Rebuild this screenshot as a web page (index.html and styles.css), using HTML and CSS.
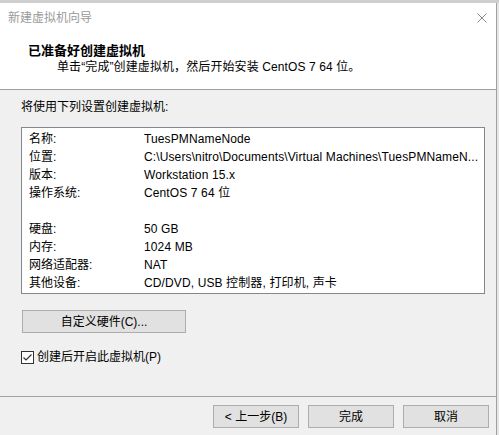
FILE: index.html
```html
<!DOCTYPE html>
<html lang="zh-CN">
<head>
  <meta charset="UTF-8" />
  <meta name="viewport" content="width=device-width, initial-scale=1.0"/>
  <title>新建虚拟机向导</title>
  <link rel="stylesheet" href="styles.css">
</head>
<body>
  <div class="top-strip"></div>
  <div class="window">
    <div class="titlebar">
      <span class="title">新建虚拟机向导</span>
      <svg class="close" width="10" height="10" viewBox="0 0 10 10">
        <path d="M0.5 0.5 L9.5 9.5 M9.5 0.5 L0.5 9.5" stroke="#8a8a8a" stroke-width="1" fill="none"/>
      </svg>
    </div>
    <div class="header">
      <h1>已准备好创建虚拟机</h1>
      <p>单击“完成”创建虚拟机，然后开始安装 CentOS 7 64 位。</p>
    </div>
    <div class="content">
      <p class="intro">将使用下列设置创建虚拟机:</p>
      <div class="summary">
        <div class="row"><span>名称:</span><span class="val">TuesPMNameNode</span></div>
        <div class="row"><span>位置:</span><span class="val">C:\Users\nitro\Documents\Virtual Machines\TuesPMNameN...</span></div>
        <div class="row"><span>版本:</span><span class="val">Workstation 15.x</span></div>
        <div class="row"><span>操作系统:</span><span class="val">CentOS 7 64 位</span></div>
        <div class="row"></div>
        <div class="row"><span>硬盘:</span><span class="val">50 GB</span></div>
        <div class="row"><span>内存:</span><span class="val">1024 MB</span></div>
        <div class="row"><span>网络适配器:</span><span class="val">NAT</span></div>
        <div class="row"><span>其他设备:</span><span class="val">CD/DVD, USB 控制器, 打印机, 声卡</span></div>
      </div>
      <button class="btn btn-wide">自定义硬件(C)...</button>
      <label class="check">
        <span class="box">
          <svg width="11" height="11" viewBox="0 0 11 11">
            <path d="M1.5 5.5 L4 8 L9.5 2.5" stroke="#333" stroke-width="1.2" fill="none"/>
          </svg>
        </span>
        创建后开启此虚拟机(P)
      </label>
    </div>
    <div class="footer">
      <button class="btn">&lt; 上一步(B)</button>
      <button class="btn">完成</button>
      <button class="btn">取消</button>
    </div>
  </div>
</body>
</html>
```

FILE: styles.css
```css
* { box-sizing: border-box; }
body {
  margin: 0;
  background: #e6e6e6;
  font-family: "Liberation Sans", "Noto Sans CJK SC", sans-serif;
  font-size: 12px;
  line-height: 16px;
  color: #000;
}
.top-strip {
  height: 3px;
  background: #cfcfcf;
}
.window {
  width: 497px;
  height: 432px;
  background: #f0f0f0;
  border-right: 1px solid #a0a0a0;
}
.titlebar {
  height: 30px;
  background: #fff;
  display: flex;
  align-items: center;
  justify-content: space-between;
  padding: 0 9px 0 8px;
}
.title {
  color: #9a9a9a;
}
.header {
  height: 57px;
  background: #fff;
  border-bottom: 1px solid #a0a0a0;
  padding: 10px 0 0 28px;
}
.header h1 {
  margin: 0;
  font-size: 13px;
  font-weight: bold;
  line-height: 16px;
}
.header p {
  margin: 0;
  padding-left: 29px;
  letter-spacing: 0.1px;
}
.content {
  height: 306px;
  padding: 9px 0 0 21px;
}
.intro {
  margin: 0;
}
.summary {
  width: 464px;
  height: 167px;
  margin-top: 12px;
  background: #fff;
  border: 1px solid #828790;
  padding: 2px 0 0 7px;
}
.row {
  display: grid;
  grid-template-columns: 115px 1fr;
  height: 18px;
  line-height: 18px;
  white-space: nowrap;
}
.val {
  letter-spacing: 0.12px;
}
.btn {
  font: inherit;
  color: #000;
  height: 23px;
  width: 86px;
  background: #e1e1e1;
  border: 1px solid #adadad;
  padding: 0;
}
.btn-wide {
  display: block;
  width: 164px;
  margin: 16px 0 0 1px;
}
.check {
  display: flex;
  align-items: center;
  height: 16px;
  margin-top: 16px;
}
.box {
  width: 13px;
  height: 13px;
  border: 1px solid #333;
  background: #fff;
  margin-right: 3px;
  display: flex;
}
.footer {
  border-top: 1px solid #a0a0a0;
  display: flex;
  justify-content: flex-end;
  gap: 9px;
  padding: 8px 7px 0 0;
}
```
